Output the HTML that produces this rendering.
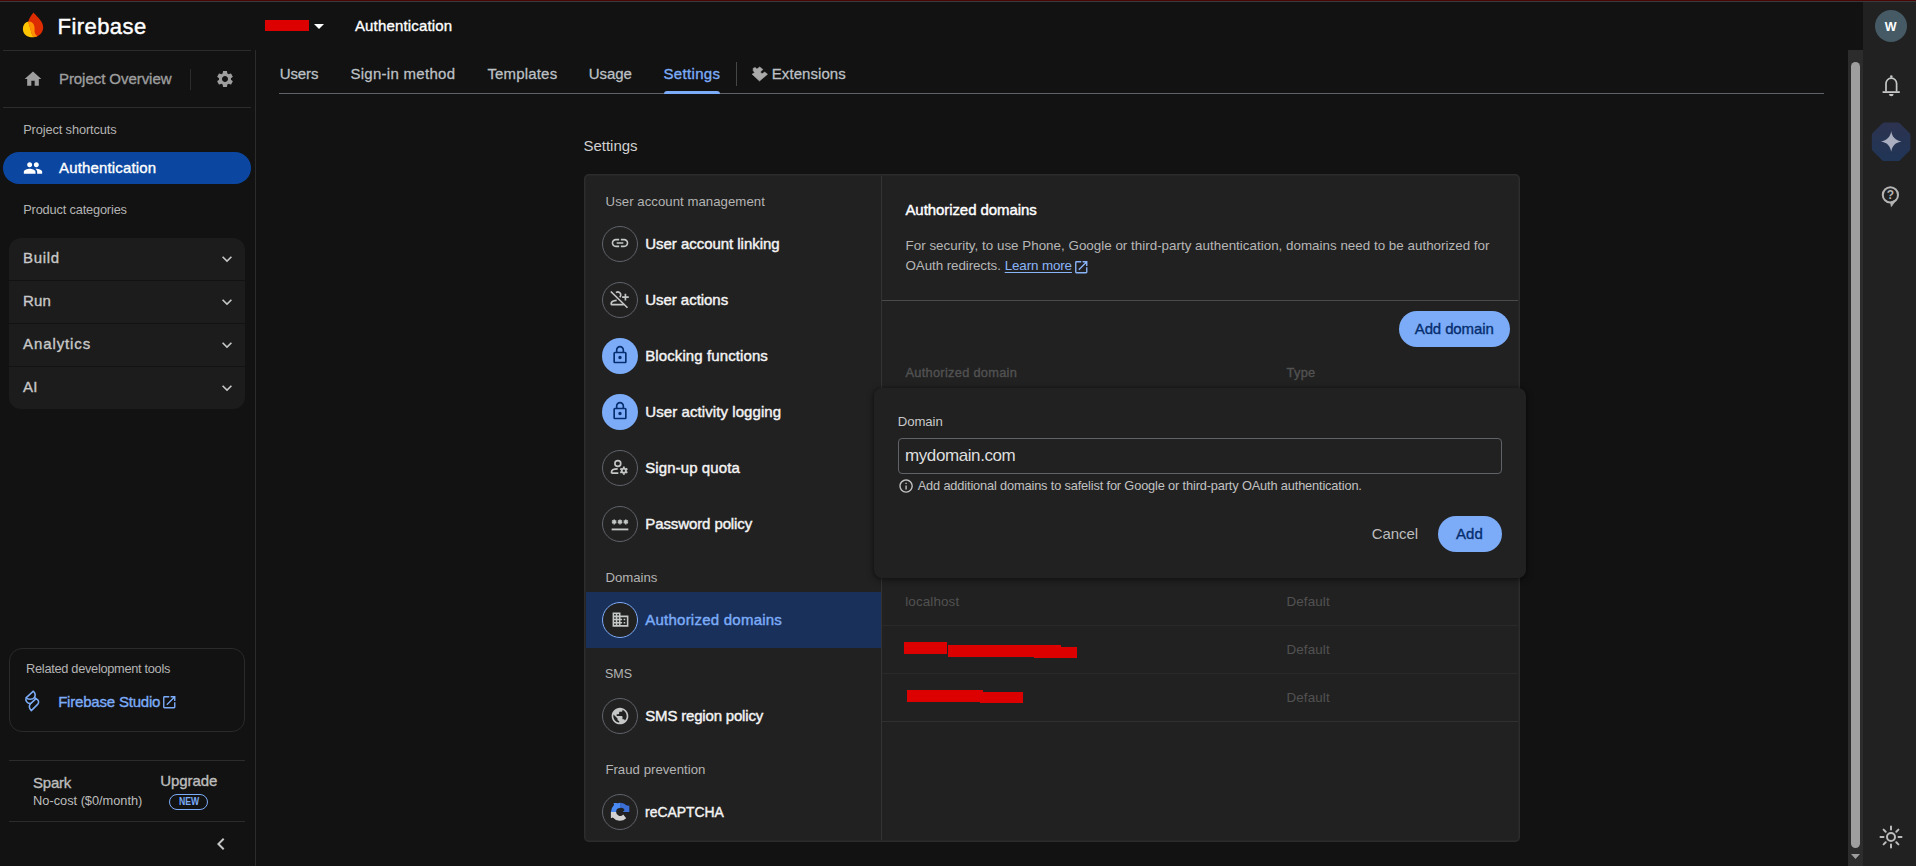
<!DOCTYPE html>
<html lang="en"><head><meta charset="utf-8"><title>Firebase console - Authentication settings</title>
<style>
html,body{margin:0;padding:0;background:#121212;}
body{width:1916px;height:866px;position:relative;overflow:hidden;font-family:"Liberation Sans",sans-serif;}
.a{position:absolute;}
.t{position:absolute;white-space:nowrap;line-height:1;}
svg{position:absolute;overflow:visible;}
.circ{position:absolute;width:34px;height:34px;border:1px solid #5f6368;border-radius:50%;}
.hl{position:absolute;height:1px;}
</style></head><body>
<div class="a" style="left:0px;top:0px;width:1916px;height:1px;background:#4a0606;"></div>
<div class="a" style="left:0px;top:1px;width:1916px;height:1px;background:#3a3a3a;"></div>
<nav aria-label="Project navigation">
<div class="a" style="left:255px;top:50px;width:1px;height:816px;background:#2c2c2c;"></div>
<div class="a" style="left:3px;top:50px;width:248px;height:1px;background:#2c2c2c;"></div>
<div class="a" style="left:3px;top:107px;width:248px;height:1px;background:#2c2c2c;"></div>
<div class="a" style="left:190px;top:69px;width:1px;height:21px;background:#2c2c2c;"></div>
<div class="a" style="left:9px;top:760px;width:236px;height:1px;background:#2c2c2c;"></div>
<div class="a" style="left:9px;top:821px;width:236px;height:1px;background:#2c2c2c;"></div>
<svg style="left:22px;top:12px" width="22" height="26" viewBox="0 0 22 26">
<defs><clipPath id="yc"><path d="M0.9 17 C0.9 12.5 3.8 9.5 7 9.5 C10.5 9.5 12.6 12.5 12.6 16.5 C12.6 19.500 12 21.500 15.500 24.200 C13.500 25.400 10 25.600 7.500 25 C3.500 24 0.900 21 0.900 17Z"/></clipPath></defs>
<path fill="#ffc400" d="M0.9 17 C0.9 12.5 3.8 9.5 7 9.5 C10.5 9.5 12.6 12.5 12.6 16.5 C12.6 19.500 12 21.500 15.500 24.200 C13.500 25.400 10 25.600 7.500 25 C3.500 24 0.900 21 0.900 17Z"/>
<path fill="#dd2c00" d="M11.5 0.5 C13.5 3.5 21.2 8.5 21.2 15.2 C21.2 20.6 17.2 24.6 12.6 24.6 C11 24.6 10.3 23.500 9.800 22 C8.800 18 7 13 6.200 9.600 C7 6.500 9.500 3 11.500 0.500Z"/>
<path clip-path="url(#yc)" fill="#ff9100" d="M11.5 0.5 C13.5 3.5 21.2 8.5 21.2 15.2 C21.2 20.6 17.2 24.6 12.6 24.6 C11 24.6 10.3 23.500 9.800 22 C8.800 18 7 13 6.200 9.600 C7 6.500 9.500 3 11.500 0.500Z"/>
</svg>
<svg style="left:23px;top:68.5px" width="20" height="20" viewBox="0 0 24 24" ><path fill="#9e9e9e" d="M10 20v-6h4v6h5v-8h3L12 3 2 12h3v8z"/></svg>
<svg style="left:214.5px;top:68.8px" width="20" height="20" viewBox="0 0 24 24" ><path fill="#9e9e9e" d="M19.14 12.94c.04-.3.06-.61.06-.94 0-.32-.02-.64-.07-.94l2.03-1.58c.18-.14.23-.41.12-.61l-1.92-3.32c-.12-.22-.37-.29-.59-.22l-2.39.96c-.5-.38-1.03-.7-1.62-.94l-.36-2.54c-.04-.24-.24-.41-.48-.41h-3.84c-.24 0-.43.17-.47.41l-.36 2.54c-.59.24-1.13.57-1.62.94l-2.39-.96c-.22-.08-.47 0-.59.22L2.74 8.87c-.12.21-.08.47.12.61l2.03 1.58c-.05.3-.09.63-.09.94s.02.64.07.94l-2.03 1.58c-.18.14-.23.41-.12.61l1.92 3.32c.12.22.37.29.59.22l2.39-.96c.5.38 1.03.7 1.62.94l.36 2.54c.05.24.24.41.48.41h3.84c.24 0 .44-.17.47-.41l.36-2.54c.59-.24 1.13-.56 1.62-.94l2.39.96c.22.08.47 0 .59-.22l1.92-3.32c.12-.22.07-.47-.12-.61l-2.01-1.58zM12 15.6c-1.98 0-3.6-1.62-3.6-3.6s1.62-3.6 3.6-3.6 3.6 1.62 3.6 3.6-1.62 3.6-3.6 3.6z"/></svg>
<div class="a" style="left:3px;top:152px;width:248px;height:32px;background:#0b47a1;border-radius:16px;"></div>
<svg style="left:23px;top:158px" width="20" height="20" viewBox="0 0 24 24" ><path fill="#ffffff" d="M16 11c1.66 0 2.99-1.34 2.99-3S17.66 5 16 5c-1.66 0-3 1.34-3 3s1.34 3 3 3zm-8 0c1.66 0 2.99-1.34 2.99-3S9.66 5 8 5C6.34 5 5 6.34 5 8s1.34 3 3 3zm0 2c-2.33 0-7 1.17-7 3.5V19h14v-2.500c0-2.330-4.670-3.500-7-3.500zm8 0c-.29 0-.62.02-.97.05 1.16.84 1.970 1.970 1.970 3.450V19h6v-2.500c0-2.330-4.670-3.500-7-3.500z"/></svg>
<div class="a" style="left:9px;top:238px;width:236px;height:171px;background:#1c1c1c;border-radius:12px;"></div>
<div class="a" style="left:9px;top:280px;width:236px;height:1px;background:#121212;"></div>
<div class="a" style="left:9px;top:323px;width:236px;height:1px;background:#121212;"></div>
<div class="a" style="left:9px;top:366px;width:236px;height:1px;background:#121212;"></div>
<svg style="left:217px;top:248.5px" width="20" height="20" viewBox="0 0 24 24" ><path fill="#c4c7c5" d="M16.59 8.59 12 13.17 7.410 8.590 6 10l6 6 6-6z"/></svg>
<svg style="left:217px;top:291.5px" width="20" height="20" viewBox="0 0 24 24" ><path fill="#c4c7c5" d="M16.59 8.59 12 13.17 7.410 8.590 6 10l6 6 6-6z"/></svg>
<svg style="left:217px;top:334.5px" width="20" height="20" viewBox="0 0 24 24" ><path fill="#c4c7c5" d="M16.59 8.59 12 13.17 7.410 8.590 6 10l6 6 6-6z"/></svg>
<svg style="left:217px;top:377.5px" width="20" height="20" viewBox="0 0 24 24" ><path fill="#c4c7c5" d="M16.59 8.59 12 13.17 7.410 8.590 6 10l6 6 6-6z"/></svg>
<div class="a" style="left:9px;top:648px;width:234px;height:82px;background:transparent;border:1px solid #2a2a2a;border-radius:13px;"></div>
<svg style="left:18px;top:686px" width="30" height="30" viewBox="0 0 30 30" fill="none" stroke="#7cacf8" stroke-width="1.550" stroke-linejoin="round" stroke-linecap="round">
<path d="M15.400 5.200L8.300 11.600C9.500 13.800 14.500 14 16.300 11.600C17.600 9.600 17.200 7 15.400 5.200Z"/>
<path d="M13.300 24.600L19.600 18.400C21.400 16.400 20.800 13.800 18 12.600L12.600 17.600C11 19.600 11 22.400 13.300 24.600Z"/>
<path d="M8.300 11.600C7 14.500 8.800 17.600 12.600 17.600M16.400 11.500L18 12.600"/></svg>
<svg style="left:160.8px;top:693.7px" width="16.5" height="16.5" viewBox="0 0 24 24" ><path fill="#7cacf8" d="M19 19H5V5h7V3H5c-1.11 0-2 .9-2 2v14c0 1.1.89 2 2 2h14c1.1 0 2-.9 2-2v-7h-2v7zM14 3v2h3.590l-9.830 9.830 1.410 1.410L19 6.410V10h2V3h-7z"/></svg>
<div class="a" style="left:169px;top:794px;width:37px;height:14px;background:transparent;border:1px solid #7cacf8;border-radius:8px;"></div>
<svg style="left:209.1px;top:832px" width="24" height="24" viewBox="0 0 24 24" ><path fill="#c4c7c5" d="M15.41 7.41 14 6l-6 6 6 6 1.41-1.41L10.83 12z"/></svg>
<span class="t" id="t0" style="left:57.56px;top:15.78px;font-size:22px;color:#ffffff;letter-spacing:0.441px;-webkit-text-stroke:0.42px currentColor;">Firebase</span>
<span class="t" id="t1" style="left:58.95px;top:71.30px;font-size:15px;color:#9e9e9e;letter-spacing:-0.052px;-webkit-text-stroke:0.35px currentColor;">Project Overview</span>
<span class="t" id="t2" style="left:23.20px;top:124.16px;font-size:12.8px;color:#b4b4b4;letter-spacing:-0.120px;">Project shortcuts</span>
<span class="t" id="t3" style="left:59.05px;top:159.50px;font-size:15px;color:#ffffff;letter-spacing:0.156px;-webkit-text-stroke:0.35px currentColor;">Authentication</span>
<span class="t" id="t4" style="left:23.20px;top:203.56px;font-size:12.8px;color:#b4b4b4;letter-spacing:-0.171px;">Product categories</span>
<span class="t" id="t5" style="left:23.05px;top:250.30px;font-size:15px;color:#c8c8c8;letter-spacing:0.685px;-webkit-text-stroke:0.35px currentColor;">Build</span>
<span class="t" id="t6" style="left:23.05px;top:293.30px;font-size:15px;color:#c8c8c8;letter-spacing:0.084px;-webkit-text-stroke:0.35px currentColor;">Run</span>
<span class="t" id="t7" style="left:23.05px;top:336.30px;font-size:15px;color:#c8c8c8;letter-spacing:0.896px;-webkit-text-stroke:0.35px currentColor;">Analytics</span>
<span class="t" id="t8" style="left:23.05px;top:379.30px;font-size:15px;color:#c8c8c8;letter-spacing:0.112px;-webkit-text-stroke:0.35px currentColor;">AI</span>
<span class="t" id="t9" style="left:26.10px;top:663.16px;font-size:12.8px;color:#b4b4b4;letter-spacing:-0.302px;">Related development tools</span>
<span class="t" id="t10" style="left:58.15px;top:694.10px;font-size:15px;color:#7cacf8;letter-spacing:-0.197px;-webkit-text-stroke:0.35px currentColor;">Firebase Studio</span>
<span class="t" id="t11" style="left:32.95px;top:775.30px;font-size:15px;color:#bdbdbd;letter-spacing:-0.197px;-webkit-text-stroke:0.35px currentColor;">Spark</span>
<span class="t" id="t12" style="left:33.10px;top:795.16px;font-size:12.8px;color:#bdbdbd;letter-spacing:-0.014px;">No-cost ($0/month)</span>
<span class="t" id="t13" style="left:160.25px;top:773.30px;font-size:15px;color:#bdbdbd;letter-spacing:-0.091px;-webkit-text-stroke:0.35px currentColor;">Upgrade</span>
<span class="t" id="t14" style="left:178.89px;top:796.53px;font-size:10px;color:#7cacf8;letter-spacing:0.000px;font-weight:bold;display:inline-block;transform:scaleX(0.8653);transform-origin:0 0;">NEW</span>
</nav>
<header>
<div class="a" style="left:265px;top:20px;width:44px;height:11px;background:#dd0000;"></div>
<svg style="left:314px;top:24px" width="10" height="5" viewBox="0 0 10 5"><path d="M0 0h10L5 5z" fill="#ffffff"/></svg>
<span class="t" id="t15" style="left:354.95px;top:18.30px;font-size:15px;color:#ffffff;letter-spacing:0.156px;-webkit-text-stroke:0.35px currentColor;">Authentication</span>
</header>
<nav aria-label="Authentication tabs">
<div class="a" style="left:279px;top:93px;width:1545px;height:1px;background:#5f6368;"></div>
<div class="a" style="left:664px;top:91px;width:56px;height:3px;background:#7cacf8;border-radius:3px 3px 0 0;"></div>
<div class="a" style="left:736px;top:62px;width:1px;height:24px;background:#444746;"></div>
<svg style="left:744px;top:60px" width="36" height="28" viewBox="0 0 36 28"><path fill="#aaaaaa" stroke="#aaaaaa" stroke-width="0.6" stroke-linejoin="round" d="M9.2 8.25L11.2 7.6L12.9 9.1L15.7 6.95L18.9 9.4L16.3 12L18.1 13.75L20.7 12.1L23.5 14.2L15.5 21L8.1 14.2L10.7 12.5L9.2 10.7Z"/></svg>
<span class="t" id="t16" style="left:279.75px;top:66.00px;font-size:15px;color:#bdc1c6;letter-spacing:-0.118px;-webkit-text-stroke:0.26px currentColor;">Users</span>
<span class="t" id="t17" style="left:350.45px;top:66.00px;font-size:15px;color:#bdc1c6;letter-spacing:0.284px;-webkit-text-stroke:0.26px currentColor;">Sign-in method</span>
<span class="t" id="t18" style="left:487.45px;top:66.00px;font-size:15px;color:#bdc1c6;letter-spacing:0.166px;-webkit-text-stroke:0.26px currentColor;">Templates</span>
<span class="t" id="t19" style="left:588.75px;top:66.00px;font-size:15px;color:#bdc1c6;letter-spacing:-0.090px;-webkit-text-stroke:0.26px currentColor;">Usage</span>
<span class="t" id="t20" style="left:663.45px;top:66.00px;font-size:15px;color:#7cacf8;letter-spacing:0.342px;-webkit-text-stroke:0.35px currentColor;">Settings</span>
<span class="t" id="t21" style="left:771.75px;top:66.00px;font-size:15px;color:#bdc1c6;letter-spacing:0.069px;-webkit-text-stroke:0.26px currentColor;">Extensions</span>
</nav>
<main>
<div class="a" style="left:584px;top:174px;width:936px;height:668px;background:#212121;border-radius:5px;box-shadow:inset 0 0 0 1.500px #2c2c2c;"></div>
<div class="a" style="left:881px;top:176px;width:1px;height:664px;background:#333333;"></div>
<div class="a" style="left:586px;top:592px;width:295px;height:56px;background:#19305a;"></div>
<div class="a" style="left:602px;top:226px;width:34px;height:34px;background:transparent;border-radius:50%;border:1px solid #5f6368;"></div>
<div class="a" style="left:602px;top:282px;width:34px;height:34px;background:transparent;border-radius:50%;border:1px solid #5f6368;"></div>
<div class="a" style="left:602px;top:338px;width:36px;height:36px;background:#7cacf8;border-radius:50%;"></div>
<div class="a" style="left:602px;top:394px;width:36px;height:36px;background:#7cacf8;border-radius:50%;"></div>
<div class="a" style="left:602px;top:450px;width:34px;height:34px;background:transparent;border-radius:50%;border:1px solid #5f6368;"></div>
<div class="a" style="left:602px;top:506px;width:34px;height:34px;background:transparent;border-radius:50%;border:1px solid #5f6368;"></div>
<div class="a" style="left:602px;top:602px;width:34px;height:34px;background:#212121;border-radius:50%;border:1px solid #7cacf8;"></div>
<div class="a" style="left:602px;top:698px;width:34px;height:34px;background:transparent;border-radius:50%;border:1px solid #5f6368;"></div>
<div class="a" style="left:602px;top:794px;width:34px;height:34px;background:transparent;border-radius:50%;border:1px solid #5f6368;"></div>
<svg style="left:610px;top:233.4px" width="20" height="20" viewBox="0 0 24 24" ><path fill="#c4c7c5" d="M3.9 12c0-1.710 1.390-3.100 3.100-3.100h4V7H7c-2.760 0-5 2.240-5 5s2.240 5 5 5h4v-1.900H7c-1.710 0-3.100-1.390-3.100-3.100zM8 13h8v-2H8v2zm9-6h-4v1.900h4c1.710 0 3.100 1.390 3.100 3.100s-1.390 3.100-3.100 3.100h-4V17h4c2.760 0 5-2.240 5-5s-2.240-5-5-5z"/></svg>
<svg style="left:610px;top:290px" width="20" height="20" viewBox="0 0 24 24" fill="none" stroke="#c4c7c5" stroke-width="2">
<path d="M1 1.800L21 21.300"/><path d="M7.200 3.200A3.300 3.300 0 1 1 11.600 8.600"/><path d="M1.400 17.600v-1c0-2.500 3-4 6.600-4.200M1.400 17.600h15"/><path d="M18.500 4.500v8M14.500 8.500h8"/></svg>
<svg style="left:610px;top:345px" width="20" height="20" viewBox="0 0 24 24" ><path fill="#062e6f" d="M18 8h-1V6c0-2.760-2.240-5-5-5S7 3.240 7 6v2H6c-1.100 0-2 .900-2 2v10c0 1.100.900 2 2 2h12c1.100 0 2-.900 2-2V10c0-1.100-.900-2-2-2zM9 6c0-1.660 1.340-3 3-3s3 1.340 3 3v2H9V6zm9 14H6V10h12v10zm-6-3c1.100 0 2-.900 2-2s-.900-2-2-2-2 .900-2 2 .900 2 2 2z"/></svg>
<svg style="left:610px;top:401px" width="20" height="20" viewBox="0 0 24 24" ><path fill="#062e6f" d="M18 8h-1V6c0-2.760-2.240-5-5-5S7 3.240 7 6v2H6c-1.100 0-2 .900-2 2v10c0 1.100.900 2 2 2h12c1.100 0 2-.900 2-2V10c0-1.100-.900-2-2-2zM9 6c0-1.660 1.340-3 3-3s3 1.340 3 3v2H9V6zm9 14H6V10h12v10zm-6-3c1.100 0 2-.900 2-2s-.900-2-2-2-2 .900-2 2 .900 2 2 2z"/></svg>
<svg style="left:610px;top:458px" width="20" height="20" viewBox="0 0 24 24" fill="none" stroke="#c4c7c5" stroke-width="2">
<circle cx="9.400" cy="6.600" r="3.500"/><path d="M1.800 18.200v-1.400c0-2.400 3.400-3.700 7.400-3.700M1.800 18.200h8.200"/>
<circle cx="16.600" cy="15.200" r="2.500" stroke-width="2.200"/><path d="M16.60 12.20L16.60 10.30 M19.20 13.70L20.84 12.75 M19.20 16.70L20.84 17.65 M16.60 18.20L16.60 20.10 M14.00 16.70L12.36 17.65 M14.00 13.70L12.36 12.75" stroke-width="2.200"/></svg>
<svg style="left:610px;top:514px" width="20" height="20" viewBox="0 0 24 24" fill="none" stroke="#c4c7c5" stroke-width="1.700">
<path d="M2 18.500h20" stroke-width="2.200"/>
<g id="ast"><path d="M5 6.500v6M2.400 8l5.200 3M7.600 8l-5.200 3"/></g>
<path d="M12 6.500v6M9.400 8l5.200 3M14.600 8l-5.200 3"/><path d="M19 6.500v6M16.400 8l5.200 3M21.600 8l-5.200 3"/></svg>
<svg style="left:610.5px;top:610px" width="19" height="19" viewBox="0 0 24 24" ><path fill="#c4c7c5" d="M12 7V3H2v18h20V7H12zM6 19H4v-2h2v2zm0-4H4v-2h2v2zm0-4H4V9h2v2zm0-4H4V5h2v2zm4 12H8v-2h2v2zm0-4H8v-2h2v2zm0-4H8V9h2v2zm0-4H8V5h2v2zm10 12h-8v-2h2v-2h-2v-2h2v-2h-2V9h8v10zm-2-8h-2v2h2v-2zm0 4h-2v2h2v-2z"/></svg>
<svg style="left:610px;top:706px" width="20" height="20" viewBox="0 0 24 24" ><path fill="#c4c7c5" d="M12 2C6.480 2 2 6.480 2 12s4.480 10 10 10 10-4.480 10-10S17.520 2 12 2zm-1 17.930c-3.950-.490-7-3.850-7-7.930 0-.620.080-1.210.210-1.790L9 15v1c0 1.100.900 2 2 2v1.930zm6.900-2.540c-.260-.810-1-1.390-1.900-1.390h-1v-3c0-.550-.450-1-1-1H8v-2h2c.550 0 1-.450 1-1V7h2c1.100 0 2-.900 2-2v-.410c2.930 1.190 5 4.060 5 7.410 0 2.080-.800 3.970-2.100 5.390z"/></svg>
<svg style="left:604px;top:796px" width="32" height="32" viewBox="0 0 32 32">
<path fill="#4a8af4" d="M6.900 15.900A9.200 9.200 0 0 1 16.100 6.700L16.100 11.900A4 4 0 0 0 12.100 15.900Z"/>
<path fill="#4a8af4" d="M9.600 6.900L13.600 7L10.300 10.600Z"/>
<path fill="#3b6fd6" d="M16.100 6.700A9.200 9.200 0 0 1 22.800 9.600L25.300 9.800V15.900H18.800L20.600 14A4 4 0 0 0 16.100 11.900Z"/>
<path fill="#d2d2d2" d="M6.900 15.900H12.100A4 4 0 0 0 19.200 18.400L22.200 22.200A9.200 9.200 0 0 1 8.800 21.500L6.900 22.200Z"/>
</svg>
<div class="a" style="left:882px;top:300px;width:636px;height:1px;background:#4a4a4a;"></div>
<svg style="left:1072.6px;top:258.8px" width="16.5" height="16.5" viewBox="0 0 24 24" ><path fill="#8ab4f8" d="M19 19H5V5h7V3H5c-1.11 0-2 .9-2 2v14c0 1.1.89 2 2 2h14c1.1 0 2-.9 2-2v-7h-2v7zM14 3v2h3.590l-9.830 9.830 1.410 1.410L19 6.410V10h2V3h-7z"/></svg>
<div class="a" style="left:1399px;top:311px;width:111px;height:36px;background:#7cacf8;border-radius:18px;"></div>
<div class="a" style="left:882px;top:625px;width:636px;height:1px;background:#292929;"></div>
<div class="a" style="left:882px;top:673px;width:636px;height:1px;background:#292929;"></div>
<div class="a" style="left:882px;top:721px;width:636px;height:1px;background:#303030;"></div>
<div class="a" style="left:904px;top:642px;width:43px;height:11.5px;background:#dd0000;"></div>
<div class="a" style="left:948px;top:645px;width:113px;height:11.6px;background:#dd0000;"></div>
<div class="a" style="left:1033.5px;top:647px;width:43.3px;height:11px;background:#dd0000;"></div>
<div class="a" style="left:907px;top:690.2px;width:75.5px;height:11.6px;background:#dd0000;"></div>
<div class="a" style="left:980px;top:691.6px;width:42.6px;height:11.3px;background:#dd0000;"></div>
<div class="a" style="left:874px;top:388px;width:652px;height:190px;background:#212121;border-radius:8px;box-shadow:0 2px 6px 1px rgba(0,0,0,0.35),0 0 3px rgba(0,0,0,0.3);"></div>
<div class="a" style="left:898px;top:438px;width:602px;height:34px;background:transparent;border:1px solid #5f6368;border-radius:4px;"></div>
<svg style="left:897.5px;top:477.6px" width="16.2" height="16.2" viewBox="0 0 24 24" ><path fill="#c4c4c4" d="M11 7h2v2h-2zm0 4h2v6h-2zm1-9C6.480 2 2 6.480 2 12s4.480 10 10 10 10-4.480 10-10S17.520 2 12 2zm0 18c-4.410 0-8-3.590-8-8s3.590-8 8-8 8 3.590 8 8-3.590 8-8 8z"/></svg>
<div class="a" style="left:1438px;top:516px;width:64px;height:36px;background:#7cacf8;border-radius:18px;"></div>
<span class="t" id="t22" style="left:583.55px;top:138.30px;font-size:15px;color:#d0d0d0;letter-spacing:-0.029px;">Settings</span>
<span class="t" id="t23" style="left:605.58px;top:194.83px;font-size:13.2px;color:#b4b4b4;letter-spacing:0.041px;">User account management</span>
<span class="t" id="t24" style="left:605.38px;top:570.83px;font-size:13.2px;color:#b4b4b4;letter-spacing:-0.016px;">Domains</span>
<span class="t" id="t25" style="left:605.43px;top:666.83px;font-size:13.2px;color:#b4b4b4;letter-spacing:0.000px;display:inline-block;transform:scaleX(0.9465);transform-origin:0 0;">SMS</span>
<span class="t" id="t26" style="left:605.38px;top:762.83px;font-size:13.2px;color:#b4b4b4;letter-spacing:0.023px;">Fraud prevention</span>
<span class="t" id="t27" style="left:645.25px;top:236.30px;font-size:15px;color:#f4f4f4;letter-spacing:-0.036px;-webkit-text-stroke:0.42px currentColor;">User account linking</span>
<span class="t" id="t28" style="left:645.25px;top:292.30px;font-size:15px;color:#f4f4f4;letter-spacing:-0.043px;-webkit-text-stroke:0.42px currentColor;">User actions</span>
<span class="t" id="t29" style="left:645.25px;top:348.30px;font-size:15px;color:#f4f4f4;letter-spacing:0.100px;-webkit-text-stroke:0.42px currentColor;">Blocking functions</span>
<span class="t" id="t30" style="left:645.25px;top:404.30px;font-size:15px;color:#f4f4f4;letter-spacing:0.083px;-webkit-text-stroke:0.42px currentColor;">User activity logging</span>
<span class="t" id="t31" style="left:645.25px;top:460.30px;font-size:15px;color:#f4f4f4;letter-spacing:0.091px;-webkit-text-stroke:0.42px currentColor;">Sign-up quota</span>
<span class="t" id="t32" style="left:645.25px;top:516.30px;font-size:15px;color:#f4f4f4;letter-spacing:-0.099px;-webkit-text-stroke:0.42px currentColor;">Password policy</span>
<span class="t" id="t33" style="left:645.25px;top:612.30px;font-size:15px;color:#7cacf8;letter-spacing:0.237px;-webkit-text-stroke:0.42px currentColor;">Authorized domains</span>
<span class="t" id="t34" style="left:645.25px;top:708.30px;font-size:15px;color:#f4f4f4;letter-spacing:-0.181px;-webkit-text-stroke:0.42px currentColor;">SMS region policy</span>
<span class="t" id="t35" style="left:645.33px;top:804.30px;font-size:15px;color:#f4f4f4;letter-spacing:0.000px;-webkit-text-stroke:0.42px currentColor;display:inline-block;transform:scaleX(0.9281);transform-origin:0 0;">reCAPTCHA</span>
<span class="t" id="t36" style="left:905.45px;top:202.30px;font-size:15px;color:#ffffff;letter-spacing:-0.075px;-webkit-text-stroke:0.42px currentColor;">Authorized domains</span>
<span class="t" id="t37" style="left:905.56px;top:239.06px;font-size:13.4px;color:#b6b6b6;letter-spacing:0.006px;">For security, to use Phone, Google or third-party authentication, domains need to be authorized for</span>
<span class="t" id="t38" style="left:905.56px;top:258.96px;font-size:13.4px;color:#b6b6b6;letter-spacing:-0.092px;">OAuth redirects.</span>
<span class="t" id="t39" style="left:1004.66px;top:258.96px;font-size:13.4px;color:#8ab4f8;letter-spacing:-0.123px;text-decoration:underline;text-underline-offset:2px;">Learn more</span>
<span class="t" id="t40" style="left:1414.75px;top:321.10px;font-size:15px;color:#062e6f;letter-spacing:-0.118px;-webkit-text-stroke:0.35px currentColor;">Add domain</span>
<span class="t" id="t41" style="left:905.40px;top:367.16px;font-size:12.8px;color:#525252;letter-spacing:0.298px;-webkit-text-stroke:0.35px currentColor;">Authorized domain</span>
<span class="t" id="t42" style="left:1286.50px;top:367.16px;font-size:12.8px;color:#525252;letter-spacing:0.314px;-webkit-text-stroke:0.35px currentColor;">Type</span>
<span class="t" id="t43" style="left:897.68px;top:414.83px;font-size:13.2px;color:#c8c8c8;letter-spacing:-0.061px;">Domain</span>
<span class="t" id="t44" style="left:905.01px;top:446.61px;font-size:17px;color:#dedede;letter-spacing:-0.408px;">mydomain.com</span>
<span class="t" id="t45" style="left:917.70px;top:480.16px;font-size:12.8px;color:#c2c2c2;letter-spacing:-0.154px;">Add additional domains to safelist for Google or third-party OAuth authentication.</span>
<span class="t" id="t46" style="left:1371.85px;top:526.30px;font-size:15px;color:#bcbcbc;letter-spacing:-0.081px;">Cancel</span>
<span class="t" id="t47" style="left:1455.95px;top:526.30px;font-size:15px;color:#062e6f;letter-spacing:0.048px;-webkit-text-stroke:0.35px currentColor;">Add</span>
<span class="t" id="t48" style="left:905.26px;top:594.96px;font-size:13.4px;color:#525252;letter-spacing:0.127px;">localhost</span>
<span class="t" id="t49" style="left:1286.46px;top:594.96px;font-size:13.4px;color:#525252;letter-spacing:0.123px;">Default</span>
<span class="t" id="t50" style="left:1286.46px;top:642.96px;font-size:13.4px;color:#525252;letter-spacing:0.123px;">Default</span>
<span class="t" id="t51" style="left:1286.46px;top:690.96px;font-size:13.4px;color:#525252;letter-spacing:0.123px;">Default</span>
</main>
<aside aria-label="Tools">
<div class="a" style="left:1863px;top:2px;width:53px;height:864px;background:#212121;"></div>
<div class="a" style="left:1848px;top:50px;width:15px;height:816px;background:#2c2c2c;"></div>
<div class="a" style="left:1851px;top:62px;width:9px;height:786px;background:#9e9e9e;border-radius:4.500px;"></div>
<svg style="left:1851px;top:854px" width="9" height="5" viewBox="0 0 9 5"><path d="M0 0h9L4.500 5z" fill="#9e9e9e"/></svg>
<div class="a" style="left:1875px;top:10px;width:32px;height:32px;background:#455a64;border-radius:50%;"></div>
<svg style="left:1872px;top:66px" width="40" height="40" viewBox="0 0 40 40" fill="none" stroke="#c4c7c5" stroke-width="1.700">
<path d="M14 25.600V17.500a5.300 5.300 0 0 1 10.600 0V25.600"/><path d="M10.600 26.100H27.800" stroke-width="1.800"/>
<circle cx="19.300" cy="10.600" r="1.300" fill="#c4c7c5" stroke="none"/><path d="M17 27.900a2.300 2.300 0 0 0 4.600 0z" fill="#c4c7c5" stroke="none"/></svg>
<svg style="left:1866px;top:117px" width="50" height="50" viewBox="0 0 50 50">
<defs><linearGradient id="gg" x1="0" y1="0" x2="0" y2="1"><stop offset="0" stop-color="#2b3350"/><stop offset="1" stop-color="#213556"/></linearGradient></defs>
<polygon points="41.36,31.54 31.84,41.06 18.36,41.06 8.84,31.54 8.84,18.06 18.36,8.54 31.84,8.54 41.36,18.06" fill="url(#gg)" stroke="url(#gg)" stroke-width="6" stroke-linejoin="round"/>
<g transform="translate(14.9,14.100) scale(0.86)"><path fill="#a9afc0" d="M12 0 C13 7 17 11 24 12 C17 13 13 17 12 24 C11 17 7 13 0 12 C7 11 11 7 12 0Z"/></g></svg>
<svg style="left:1871px;top:176px" width="40" height="40" viewBox="0 0 40 40" fill="none" stroke="#b4b4b4" stroke-width="2">
<circle cx="19.400" cy="18.900" r="7.600"/><path d="M19.600 26.200L20.300 30.600L25.200 23.800Z" fill="#b4b4b4" stroke-width="0.800" stroke-linejoin="round"/>
<text x="19.500" y="23.300" font-family="Liberation Sans, sans-serif" font-size="12" font-weight="bold" fill="#b4b4b4" stroke="none" text-anchor="middle">?</text></svg>
<svg style="left:1879px;top:825px" width="24" height="24" viewBox="0 0 24 24" fill="none" stroke="#bcbcbc" stroke-width="2" stroke-linecap="round">
<circle cx="12" cy="12" r="4"/><path d="M12 1.500v3M12 19.500v3M1.500 12h3M19.500 12h3M4.600 4.600l2.100 2.100M17.300 17.300l2.100 2.100M4.600 19.400l2.100-2.100M17.300 6.700l2.100-2.100"/></svg>
<span class="t" id="t52" style="left:1884.82px;top:21.42px;font-size:12.5px;color:#ffffff;letter-spacing:0.837px;font-weight:bold;">W</span>
</aside>

</body></html>
